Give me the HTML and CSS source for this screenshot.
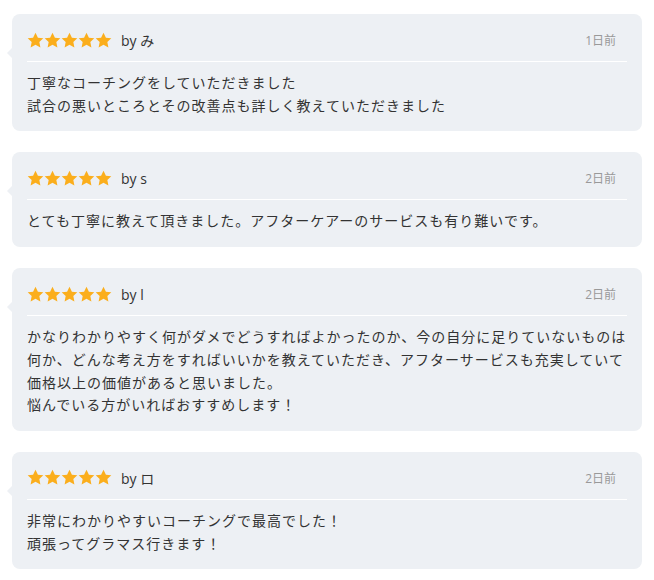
FILE: index.html
```html
<!DOCTYPE html>
<html lang="ja">
<head>
  <meta charset="UTF-8" />
  <meta name="viewport" content="width=device-width, initial-scale=1.0" />
  <title>レビュー</title>
  <link rel="stylesheet" href="styles.css">
</head>
<body>

<main class="reviews">

  <div class="review">
    <div class="review-head">
      <div class="stars">
        <svg viewBox="0 0 24 24"><path d="M12 1l3.4 7 7.6.9-5.6 5.3 1.5 7.6L12 18.1l-6.9 3.7 1.5-7.6L1 8.9l7.6-.9z"/></svg>
        <svg viewBox="0 0 24 24"><path d="M12 1l3.4 7 7.6.9-5.6 5.3 1.5 7.6L12 18.1l-6.9 3.7 1.5-7.6L1 8.9l7.6-.9z"/></svg>
        <svg viewBox="0 0 24 24"><path d="M12 1l3.4 7 7.6.9-5.6 5.3 1.5 7.6L12 18.1l-6.9 3.7 1.5-7.6L1 8.9l7.6-.9z"/></svg>
        <svg viewBox="0 0 24 24"><path d="M12 1l3.4 7 7.6.9-5.6 5.3 1.5 7.6L12 18.1l-6.9 3.7 1.5-7.6L1 8.9l7.6-.9z"/></svg>
        <svg viewBox="0 0 24 24"><path d="M12 1l3.4 7 7.6.9-5.6 5.3 1.5 7.6L12 18.1l-6.9 3.7 1.5-7.6L1 8.9l7.6-.9z"/></svg>
      </div>
      <span class="author">by み</span>
      <span class="date">1日前</span>
    </div>
    <p class="review-body">丁寧なコーチングをしていただきました<br>試合の悪いところとその改善点も詳しく教えていただきました</p>
  </div>

  <div class="review">
    <div class="review-head">
      <div class="stars">
        <svg viewBox="0 0 24 24"><path d="M12 1l3.4 7 7.6.9-5.6 5.3 1.5 7.6L12 18.1l-6.9 3.7 1.5-7.6L1 8.9l7.6-.9z"/></svg>
        <svg viewBox="0 0 24 24"><path d="M12 1l3.4 7 7.6.9-5.6 5.3 1.5 7.6L12 18.1l-6.9 3.7 1.5-7.6L1 8.9l7.6-.9z"/></svg>
        <svg viewBox="0 0 24 24"><path d="M12 1l3.4 7 7.6.9-5.6 5.3 1.5 7.6L12 18.1l-6.9 3.7 1.5-7.6L1 8.9l7.6-.9z"/></svg>
        <svg viewBox="0 0 24 24"><path d="M12 1l3.4 7 7.6.9-5.6 5.3 1.5 7.6L12 18.1l-6.9 3.7 1.5-7.6L1 8.9l7.6-.9z"/></svg>
        <svg viewBox="0 0 24 24"><path d="M12 1l3.4 7 7.6.9-5.6 5.3 1.5 7.6L12 18.1l-6.9 3.7 1.5-7.6L1 8.9l7.6-.9z"/></svg>
      </div>
      <span class="author">by s</span>
      <span class="date">2日前</span>
    </div>
    <p class="review-body">とても丁寧に教えて頂きました。アフターケアーのサービスも有り難いです。</p>
  </div>

  <div class="review">
    <div class="review-head">
      <div class="stars">
        <svg viewBox="0 0 24 24"><path d="M12 1l3.4 7 7.6.9-5.6 5.3 1.5 7.6L12 18.1l-6.9 3.7 1.5-7.6L1 8.9l7.6-.9z"/></svg>
        <svg viewBox="0 0 24 24"><path d="M12 1l3.4 7 7.6.9-5.6 5.3 1.5 7.6L12 18.1l-6.9 3.7 1.5-7.6L1 8.9l7.6-.9z"/></svg>
        <svg viewBox="0 0 24 24"><path d="M12 1l3.4 7 7.6.9-5.6 5.3 1.5 7.6L12 18.1l-6.9 3.7 1.5-7.6L1 8.9l7.6-.9z"/></svg>
        <svg viewBox="0 0 24 24"><path d="M12 1l3.4 7 7.6.9-5.6 5.3 1.5 7.6L12 18.1l-6.9 3.7 1.5-7.6L1 8.9l7.6-.9z"/></svg>
        <svg viewBox="0 0 24 24"><path d="M12 1l3.4 7 7.6.9-5.6 5.3 1.5 7.6L12 18.1l-6.9 3.7 1.5-7.6L1 8.9l7.6-.9z"/></svg>
      </div>
      <span class="author">by l</span>
      <span class="date">2日前</span>
    </div>
    <p class="review-body">かなりわかりやすく何がダメでどうすればよかったのか、今の自分に足りていないものは何か、どんな考え方をすればいいかを教えていただき、アフターサービスも充実していて価格以上の価値があると思いました。<br>悩んでいる方がいればおすすめします！</p>
  </div>

  <div class="review">
    <div class="review-head">
      <div class="stars">
        <svg viewBox="0 0 24 24"><path d="M12 1l3.4 7 7.6.9-5.6 5.3 1.5 7.6L12 18.1l-6.9 3.7 1.5-7.6L1 8.9l7.6-.9z"/></svg>
        <svg viewBox="0 0 24 24"><path d="M12 1l3.4 7 7.6.9-5.6 5.3 1.5 7.6L12 18.1l-6.9 3.7 1.5-7.6L1 8.9l7.6-.9z"/></svg>
        <svg viewBox="0 0 24 24"><path d="M12 1l3.4 7 7.6.9-5.6 5.3 1.5 7.6L12 18.1l-6.9 3.7 1.5-7.6L1 8.9l7.6-.9z"/></svg>
        <svg viewBox="0 0 24 24"><path d="M12 1l3.4 7 7.6.9-5.6 5.3 1.5 7.6L12 18.1l-6.9 3.7 1.5-7.6L1 8.9l7.6-.9z"/></svg>
        <svg viewBox="0 0 24 24"><path d="M12 1l3.4 7 7.6.9-5.6 5.3 1.5 7.6L12 18.1l-6.9 3.7 1.5-7.6L1 8.9l7.6-.9z"/></svg>
      </div>
      <span class="author">by ロ</span>
      <span class="date">2日前</span>
    </div>
    <p class="review-body">非常にわかりやすいコーチングで最高でした！<br>頑張ってグラマス行きます！</p>
  </div>

</main>

</body>
</html>
```

FILE: styles.css
```css
body {
  margin: 0;
  padding: 14px 12px;
  background-color: #ffffff;
  font-family: "Open Sans", "Noto Sans CJK JP", sans-serif;
  color: #333;
}

.reviews {
  display: flex;
  flex-direction: column;
  gap: 21px;
}

.review {
  position: relative;
  background-color: #edf0f4;
  border-radius: 8px;
  padding: 11px 15px 14px;
}

/* little speech-bubble tip on the left edge */
.review::before {
  content: "";
  position: absolute;
  left: -5px;
  top: 34px;
  border-top: 5px solid transparent;
  border-bottom: 5px solid transparent;
  border-right: 5px solid #edf0f4;
}

.review-head {
  display: flex;
  align-items: center;
  height: 30px;
  padding-bottom: 6px;
  border-bottom: 1px solid #ffffff;
}

.stars {
  display: flex;
}

.stars svg {
  width: 17px;
  height: 17px;
  fill: #fbae1c;
}

.author {
  margin-left: 9px;
  font-size: 14px;
  color: #333;
}

.date {
  margin-left: auto;
  margin-right: 11px;
  font-size: 12px;
  color: #999;
}

.review-body {
  margin: 10px 0 0;
  font-size: 14px;
  line-height: 22.7px;
  color: #333;
  letter-spacing: 1px;
}
```
